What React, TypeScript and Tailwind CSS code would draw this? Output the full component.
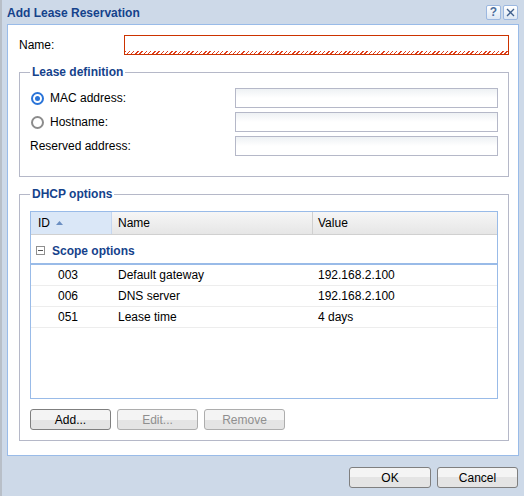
import React from "react";

const font = { fontFamily: '"Liberation Sans", Arial, sans-serif' };

type Row = { id: string; name: string; value: string };

const rows: Row[] = [
  { id: "003", name: "Default gateway", value: "192.168.2.100" },
  { id: "006", name: "DNS server", value: "192.168.2.100" },
  { id: "051", name: "Lease time", value: "4 days" },
];

function TextInput() {
  return (
    <div className="h-[20px] border border-[#b5b8c8] bg-gradient-to-b from-[#eef1f4] via-white to-white" />
  );
}

function Radio({ checked }: { checked?: boolean }) {
  return checked ? (
    <span className="flex h-[13px] w-[13px] items-center justify-center rounded-full border-2 border-[#2a74d8] bg-white">
      <span className="h-[5px] w-[5px] rounded-full bg-[#2a74d8]" />
    </span>
  ) : (
    <span className="h-[13px] w-[13px] rounded-full border-2 border-[#8c8c8c] bg-white" />
  );
}

function Button({ label, disabled, wide }: { label: string; disabled?: boolean; wide?: boolean }) {
  return (
    <button
      type="button"
      className={`flex h-[21px] ${wide ? "w-[82px]" : "w-[81px]"} items-center justify-center rounded-[3px] border bg-gradient-to-b from-[#f4f4f4] from-50% to-[#e4e4e4] to-50% text-[12px] ${
        disabled ? "border-[#adadad] text-[#8f8f8f]" : "border-[#7f7f7f] text-black"
      }`}
    >
      {label}
    </button>
  );
}

function TitleButton({ children }: { children: React.ReactNode }) {
  return (
    <span className="flex h-[15px] w-[15px] items-center justify-center rounded-[2px] border border-[#9cb8e0] bg-gradient-to-b from-white to-[#dde7f3] text-[12px] font-bold leading-none text-[#4b6f9e]">
      {children}
    </span>
  );
}

export default function App() {
  return (
    <div
      className="flex h-[496px] w-[524px] flex-col border-l-2 border-[#b8bfc8] bg-[#cdd9e8] pl-[5px] pr-[5px]"
      style={font}
    >
      <div className="flex h-[24px] items-center justify-between">
        <span className="pt-[1px] text-[12px] font-bold text-[#15428b]">Add Lease Reservation</span>
        <div className="flex gap-[2px] pr-[1px]">
          <TitleButton>?</TitleButton>
          <TitleButton>
            <svg width="9" height="9" viewBox="0 0 9 9">
              <path d="M1 1L8 8M8 1L1 8" stroke="#3f5f8c" strokeWidth="1.3" />
            </svg>
          </TitleButton>
        </div>
      </div>

      <div className="flex h-[432px] flex-col border border-[#99bbe8] bg-white pl-[11px] pr-[9px] text-[12px] text-black">
        <div className="mt-[10px] grid grid-cols-[105px_1fr] items-center">
          <span>Name:</span>
          <div className="relative h-[20px] border border-[#cc3300] bg-white">
            <div className="absolute bottom-0 left-0 right-0 h-[3px] bg-[repeating-linear-gradient(135deg,#e04020_0px,#e04020_1px,transparent_1px,transparent_3px)]" />
          </div>
        </div>

        <fieldset className="mt-[8px] border border-[#b5b8c8] px-[10px] pb-[20px]">
          <legend className="px-[2px] text-[12px] font-bold text-[#15428b]">Lease definition</legend>
          <div className="mt-[7px] grid grid-cols-[205px_1fr] gap-y-[4px]">
            <label className="flex items-center gap-[6px] pl-[1px]">
              <Radio checked />
              MAC address:
            </label>
            <TextInput />
            <label className="flex items-center gap-[6px] pl-[1px]">
              <Radio />
              Hostname:
            </label>
            <TextInput />
            <span className="flex items-center">Reserved address:</span>
            <TextInput />
          </div>
        </fieldset>

        <fieldset className="mt-[8px] border border-[#b5b8c8] px-[10px] pb-[10px]">
          <legend className="px-[2px] text-[12px] font-bold text-[#15428b]">DHCP options</legend>
          <div className="mt-[8px] flex h-[188px] flex-col border border-[#99bbe8]">
            <div className="grid h-[23px] grid-cols-[81px_201px_1fr] border-b border-[#d0d0d0] bg-gradient-to-b from-[#f6f6f6] to-[#e6e6e6]">
              <div className="flex items-center gap-[6px] border-r border-[#c5d6ef] bg-[#dae7f7] pl-[7px]">
                ID
                <svg width="7" height="4" viewBox="0 0 7 4">
                  <path d="M0 4L3.5 0L7 4Z" fill="#6b8fc2" />
                </svg>
              </div>
              <div className="flex items-center border-r border-[#d0d0d0] pl-[6px]">Name</div>
              <div className="flex items-center pl-[5px]">Value</div>
            </div>
            <div className="flex h-[30px] items-center gap-[7px] border-b-2 border-[#99bbe8] pl-[5px] pt-[3px] font-bold text-[#15428b]">
              <span className="flex h-[9px] w-[9px] items-center justify-center border border-[#8f8f8f] bg-white">
                <span className="h-px w-[5px] bg-[#555]" />
              </span>
              Scope options
            </div>
            {rows.map((r) => (
              <div
                key={r.id}
                className="grid h-[21px] grid-cols-[81px_201px_1fr] items-center border-b border-[#ededed]"
              >
                <span className="pl-[27px]">{r.id}</span>
                <span className="pl-[6px]">{r.name}</span>
                <span className="pl-[5px]">{r.value}</span>
              </div>
            ))}
          </div>
          <div className="mt-[10px] flex gap-[6px]">
            <Button label="Add..." />
            <Button label="Edit..." disabled />
            <Button label="Remove" disabled />
          </div>
        </fieldset>
      </div>

      <div className="mt-[11px] flex justify-end gap-[6px] pr-[1px]">
        <Button label="OK" wide />
        <Button label="Cancel" />
      </div>
    </div>
  );
}
